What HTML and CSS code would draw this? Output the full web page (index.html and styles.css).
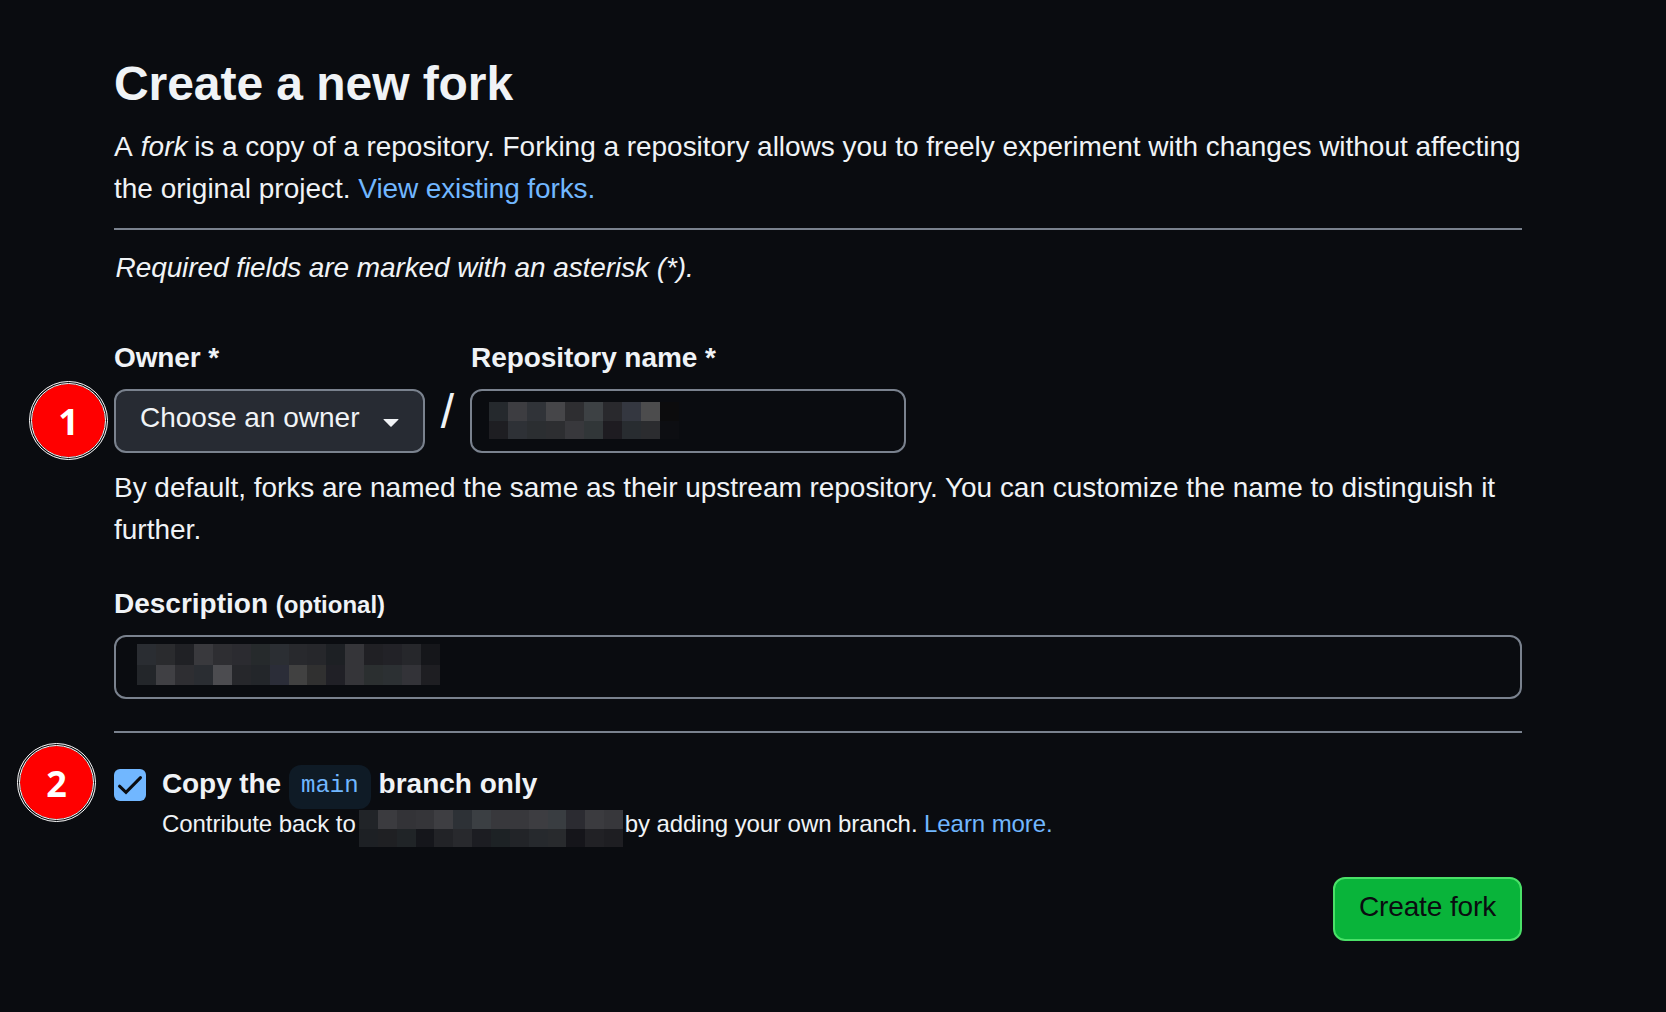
FILE: index.html
```html
<!DOCTYPE html>
<html lang="en">
<head>
<meta charset="utf-8">
<title>Create a new fork</title>
<link rel="stylesheet" href="styles.css">
</head>
<body>
<main class="page">
  <header class="intro">
    <h1 class="title"><span>Create a new fork</span></h1>
    <p class="lead"><span class="lead-a">A <em>fork</em> is a copy of a repository. Forking a repository allows you to freely experiment with changes without affecting</span><br><span class="lead-b">the original project. <a class="link">View existing forks.</a></span></p>
  </header>
  <p class="required"><span>Required fields are marked with an asterisk (*).</span></p>
  <form class="form">
    <div class="names">
      <div class="field owner">
        <span class="label"><span class="label-owner">Owner *</span></span>
        <button type="button" class="select"><span>Choose an owner</span><svg class="caret" width="16" height="8" viewBox="0 0 16 8"><path d="M1 0H15Q16 0 15.3 .8L8.6 7.6Q8 8.1 7.4 7.6L.7 .8Q0 0 1 0Z" fill="#f0f3f6"/></svg></button>
        <span class="marker marker-one">1</span>
      </div>
      <span class="slash">/</span>
      <div class="field repo">
        <span class="label"><span class="label-repo">Repository name *</span></span>
        <div class="input input-repo">
          <svg width="190" height="37" shape-rendering="crispEdges">
            <path fill="#25292d" d="M0 0h19v19H0z"/><path fill="#3d3d41" d="M19 0h19v19H19z"/><path fill="#303338" d="M38 0h19v19H38z"/><path fill="#464649" d="M57 0h19v19H57z"/><path fill="#2e2e31" d="M76 0h19v19H76z"/><path fill="#3d4144" d="M95 0h19v19H95z"/><path fill="#29292d" d="M114 0h19v19h-19z"/><path fill="#343740" d="M133 0h19v19h-19z"/><path fill="#4c4c4d" d="M152 0h19v19h-19z"/><path fill="#0c0c0d" d="M171 0h19v19h-19z"/>
            <path fill="#1e1e22" d="M0 19h19v18H0z"/><path fill="#2e3136" d="M19 19h19v18H19z"/><path fill="#2b2e31" d="M38 19h19v18H38z"/><path fill="#2d2e31" d="M57 19h19v18H57z"/><path fill="#38383c" d="M76 19h19v18H76z"/><path fill="#313638" d="M95 19h19v18H95z"/><path fill="#1e1c21" d="M114 19h19v18h-19z"/><path fill="#282c30" d="M133 19h19v18h-19z"/><path fill="#2b2c2f" d="M152 19h19v18h-19z"/><path fill="#0d0e12" d="M171 19h19v18h-19z"/>
          </svg>
        </div>
      </div>
    </div>
    <p class="help"><span class="help-a">By default, forks are named the same as their upstream repository. You can customize the name to distinguish it</span><br><span class="help-b">further.</span></p>
    <div class="field description">
      <span class="label"><span class="label-desc">Description</span> <small>(optional)</small></span>
      <div class="input input-desc">
        <svg width="303" height="41" shape-rendering="crispEdges">
          <path fill="#2a2d32" d="M0 0h19v21H0z"/><path fill="#2a2b2e" d="M19 0h19v21H19z"/><path fill="#202125" d="M38 0h19v21H38z"/><path fill="#39393d" d="M57 0h19v21H57z"/><path fill="#2e2e32" d="M76 0h19v21H76z"/><path fill="#2b2b30" d="M95 0h19v21H95z"/><path fill="#262a2c" d="M114 0h19v21h-19z"/><path fill="#2b2e33" d="M133 0h19v21h-19z"/><path fill="#28292d" d="M152 0h18v21h-18z"/><path fill="#26272b" d="M170 0h19v21h-19z"/><path fill="#1d2024" d="M189 0h19v21h-19z"/><path fill="#353539" d="M208 0h19v41h-19z"/><path fill="#202024" d="M227 0h19v21h-19z"/><path fill="#222227" d="M246 0h19v21h-19z"/><path fill="#26272b" d="M265 0h19v21h-19z"/><path fill="#15161a" d="M284 0h19v21h-19z"/>
          <path fill="#23262a" d="M0 21h19v20H0z"/><path fill="#404044" d="M19 21h19v20H19z"/><path fill="#2e2e32" d="M38 21h19v20H38z"/><path fill="#2a2d32" d="M57 21h19v20H57z"/><path fill="#4c4c50" d="M76 21h19v20H76z"/><path fill="#26272b" d="M95 21h19v20H95z"/><path fill="#23262a" d="M114 21h19v20h-19z"/><path fill="#2b2d38" d="M133 21h19v20h-19z"/><path fill="#414141" d="M152 21h18v20h-18z"/><path fill="#303030" d="M170 21h19v20h-19z"/><path fill="#202026" d="M189 21h19v20h-19z"/><path fill="#2b2f30" d="M227 21h19v20h-19z"/><path fill="#2c3033" d="M246 21h19v20h-19z"/><path fill="#333338" d="M265 21h19v20h-19z"/><path fill="#1e1e22" d="M284 21h19v20h-19z"/>
        </svg>
      </div>
    </div>
    <div class="branch">
      <svg class="check" width="32" height="32" viewBox="0 0 32 32"><rect width="32" height="32" rx="6" fill="#71b7ff"/><path d="M5.5 17.2 12 23.4 26.5 8.6" fill="none" stroke="#0a0c10" stroke-width="3" stroke-linecap="round" stroke-linejoin="miter"/></svg>
      <div class="branch-text">
        <div class="branch-title"><span class="copy">Copy the</span><code>main</code><span class="only">branch only</span></div>
        <div class="branch-note">
          <span class="contribute">Contribute back to</span>
          <svg class="masked" width="264" height="37" shape-rendering="crispEdges">
            <path fill="#212428" d="M0 0h19v19H0z"/><path fill="#3b3b3f" d="M19 0h19v19H19z"/><path fill="#333337" d="M38 0h19v19H38z"/><path fill="#353539" d="M57 0h18v19H57z"/><path fill="#3e3e42" d="M75 0h19v19H75z"/><path fill="#2d3136" d="M94 0h19v19H94z"/><path fill="#3b3f43" d="M113 0h19v19h-19z"/><path fill="#38383c" d="M132 0h38v19h-38z"/><path fill="#3d3d41" d="M170 0h19v19h-19z"/><path fill="#393d41" d="M189 0h18v19h-18z"/><path fill="#2b2b31" d="M207 0h19v19h-19z"/><path fill="#3b3b3f" d="M226 0h19v19h-19z"/><path fill="#37373b" d="M245 0h19v19h-19z"/>
            <path fill="#1d2024" d="M0 19h19v18H0z"/><path fill="#1f2023" d="M19 19h19v18H19z"/><path fill="#202427" d="M38 19h19v18H38z"/><path fill="#15161b" d="M57 19h18v18H57z"/><path fill="#222327" d="M75 19h19v18H75z"/><path fill="#28292d" d="M94 19h19v18H94z"/><path fill="#1c1d22" d="M113 19h19v18h-19z"/><path fill="#1d2225" d="M132 19h19v18h-19z"/><path fill="#222428" d="M151 19h19v18h-19z"/><path fill="#26292d" d="M170 19h19v18h-19z"/><path fill="#282a2d" d="M189 19h18v18h-18z"/><path fill="#15151a" d="M207 19h19v18h-19z"/><path fill="#212125" d="M226 19h19v18h-19z"/><path fill="#1e1e22" d="M245 19h19v18h-19z"/>
          </svg>
          <span class="adding">by adding your own branch. <a class="link">Learn more.</a></span>
        </div>
      </div>
      <span class="marker marker-two">2</span>
    </div>
    <div class="actions"><button type="button" class="submit"><span>Create fork</span></button></div>
  </form>
</main>
</body>
</html>
```

FILE: styles.css
```css
* { box-sizing: border-box; }
body {
  margin: 0;
  background: #0a0c10;
  color: #f0f3f6;
  font: 28px/42px "Liberation Sans", Arial, sans-serif;
}
p, h1 { margin: 0; }
.page { width: 1408px; margin-left: 114px; padding-top: 48px; white-space: nowrap; }
.intro { height: 182px; border-bottom: 2px solid #7a828e; }
.title { font-size: 48px; line-height: 72px; font-weight: 600; letter-spacing: -0.06px; }
.lead { margin-top: 6px; }
.lead-a { letter-spacing: -0.03px; }
.lead-a em { margin: 0 -1px 0 2px; }
.lead-b .link { letter-spacing: -0.12px; }
.link { color: #71b7ff; }
.required { margin-top: 17px; padding-left: 1.5px; font-style: italic; letter-spacing: -0.08px; }

.names { display: flex; margin-top: 48px; }
.field { display: flex; flex-direction: column; position: relative; }
.label { font-weight: 600; height: 52px; }
.label small { font-size: 24px; }
.label-owner { letter-spacing: -0.1px; }
.label-repo { margin-left: 1px; letter-spacing: -0.06px; }
.select {
  display: flex; justify-content: space-between; align-items: center;
  width: 311px; height: 64px; padding: 0 24px 6px 24px;
  border: 2px solid #7a828e; border-radius: 12px;
  background: #272b33; color: #f0f3f6; font: inherit;
}
.caret { margin-top: 9px; }
.slash { width: 45px; padding-top: 51px; text-align: center; font-size: 48px; line-height: 48px; }
.input { height: 64px; border: 2px solid #7a828e; border-radius: 12px; }
.input svg { display: block; }
.input-repo { width: 436px; padding: 11px 0 0 17px; }
.input-desc { padding: 7px 0 0 21px; }
.help { margin-top: 14px; }
.help-a { letter-spacing: -0.032px; }

.description { margin-top: 32px; }
.branch {
  display: flex; position: relative; height: 126px; margin-top: 32px;
  border-top: 2px solid #7a828e;
}
.check { margin-top: 36px; flex: none; }
.branch-text { margin: 29px 0 0 16px; }
.branch-title { display: flex; font-weight: 600; height: 48px; }
.copy, .only { padding-top: 1px; }
.copy { letter-spacing: -0.1px; }
code {
  height: 44px; margin: 3px 8px 0; padding: 0 12px; border-radius: 12px;
  background: #0f1b26; color: #71b7ff;
  font: 24px/41px "Liberation Mono", monospace;
}
.branch-note { display: flex; font-size: 24px; line-height: 28px; }
.contribute { letter-spacing: -0.06px; }
.adding { letter-spacing: -0.08px; }
.masked { margin: 0 2px 0 3px; }
.actions { display: flex; justify-content: flex-end; margin-top: 20px; }
.submit {
  width: 189px; height: 64px; padding: 0 0 4px;
  border: 2px solid #4ae168; border-radius: 12px;
  background: #09b43a; color: #0a0c10; font: inherit; text-align: center;
  letter-spacing: -0.12px;
}

/* Numbered step markers sit outside the form column */
.marker {
  position: absolute; width: 79px; height: 79px; border-radius: 50%;
  border: 3px double #fff; background: #f00; background-clip: padding-box;
  color: #fff; text-align: center;
  font: 700 36px/76px "Open Sans", "Noto Sans", sans-serif;
}
.marker-one { left: -85px; top: 44px; }
.marker-two { left: -97px; top: 10px; }
```
